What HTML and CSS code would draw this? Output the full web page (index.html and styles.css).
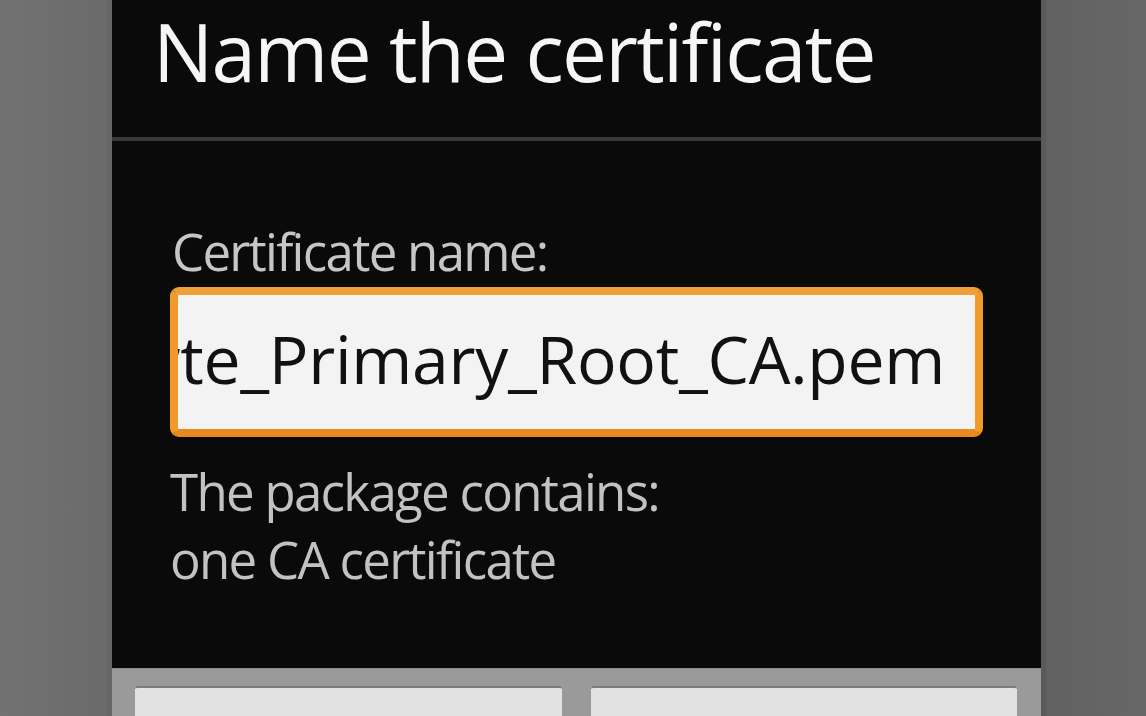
FILE: index.html
```html
<!DOCTYPE html>
<html>
<head>
<meta charset="utf-8">
<link rel="stylesheet" href="styles.css">
</head>
<body>
<div class="dialog">
  <div class="title">Name the certificate</div>
  <div class="divider"></div>
  <div class="content">
    <div class="label">Certificate name:</div>
    <div class="field"><span class="value">thawte_Primary_Root_CA.pem</span></div>
    <div class="info">The package contains:<br>one CA certificate</div>
  </div>
  <div class="buttons">
    <div class="btn"></div>
    <div class="btn"></div>
  </div>
</div>
</body>
</html>
```

FILE: styles.css
```css
html, body {
  margin: 0;
  padding: 0;
  height: 716px;
  overflow: hidden;
}
body {
  background: linear-gradient(to right, #727272 0, #6b6b6b 100px, #6a6a6a 107px, #616161 1046px, #676767 1146px);
  font-family: "Open Sans", "DejaVu Sans", sans-serif;
}
.dialog {
  margin-left: 107px;
  width: 929px;
  border-left: 5px solid #666666;
  border-right: 5px solid #5a5a5a;
  background: #0a0a0a;
  display: flex;
  flex-direction: column;
}
.title {
  height: 136px;
  padding: 1px 0 0 41px;
  color: #f6f6f6;
  font-size: 80px;
  line-height: 100px;
  letter-spacing: -1.7px;
  white-space: nowrap;
}
.divider {
  height: 4px;
  background: #383838;
}
.content {
  padding: 76px 58px 75px 58px;
  display: flex;
  flex-direction: column;
}
.label {
  padding-left: 2px;
  color: #c6c6c6;
  font-size: 51px;
  line-height: 68px;
  letter-spacing: -1.7px;
}
.field {
  margin-top: 2px;
  height: 134px;
  border: 8px solid #f19a2a;
  border-top-color: #ee9f38;
  border-bottom-color: #e88a1e;
  border-radius: 9px;
  background: #f3f3f3;
  display: flex;
  justify-content: flex-end;
  align-items: center;
  overflow: hidden;
  padding-right: 30px;
  box-sizing: content-box;
}
.value {
  color: #111111;
  font-size: 66px;
  line-height: 80px;
  letter-spacing: -0.3px;
  white-space: nowrap;
  padding-bottom: 8px;
}
.info {
  margin-top: 20px;
  color: #c2c2c2;
  font-size: 51px;
  line-height: 68px;
  letter-spacing: -1.7px;
}
.buttons {
  background: #9a9a9a;
  border-top: 1px solid #8a8a8a;
  padding: 17px 24px 0 23px;
  display: flex;
  gap: 29px;
}
.btn {
  flex: 1;
  height: 90px;
  background: #e2e2e2;
  border-top: 2px solid #7c7c7c;
  border-radius: 3px 3px 0 0;
}
```
